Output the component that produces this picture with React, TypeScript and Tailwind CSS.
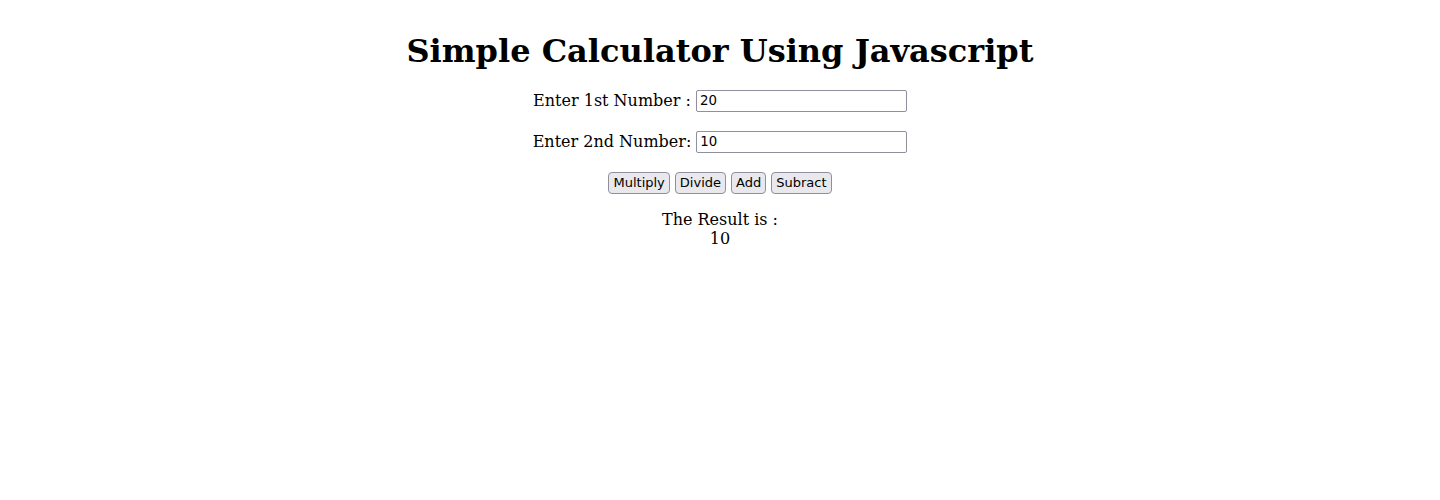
import React from "react";

export default function App() {
  const btn =
    "h-[22px] px-[4px] rounded-[4px] border border-[#8f8f9d] bg-[#e9e9ed] text-black text-[13px] leading-[normal] font-['DejaVu_Sans',sans-serif]";
  const input =
    "w-[211px] h-[22px] px-[3px] rounded-[2px] border border-[#8f8f9d] bg-white text-black text-[13.33px] leading-[normal] font-['DejaVu_Sans',sans-serif] outline-none";
  return (
    <div className="min-h-[500px] bg-white p-2 text-center text-black font-['DejaVu_Serif',serif] text-base leading-[normal]">
      <h1 className="mt-[23.5px] mb-[20px] text-[32px] font-bold leading-[normal]">
        Simple Calculator Using Javascript
      </h1>
      <div className="flex items-center justify-center gap-[5px]">
        <span>Enter 1st Number :</span>
        <input className={input} defaultValue="20" />
      </div>
      <div className="mt-[19px] flex items-center justify-center gap-[5px]">
        <span>Enter 2nd Number:</span>
        <input className={input} defaultValue="10" />
      </div>
      <div className="mt-[19px] flex items-center justify-center gap-[5px]">
        <button className={btn}>Multiply</button>
        <button className={btn}>Divide</button>
        <button className={btn}>Add</button>
        <button className={btn}>Subract</button>
      </div>
      <p className="my-4">
        The Result is :
        <br />
        <span>10</span>
      </p>
    </div>
  );
}
